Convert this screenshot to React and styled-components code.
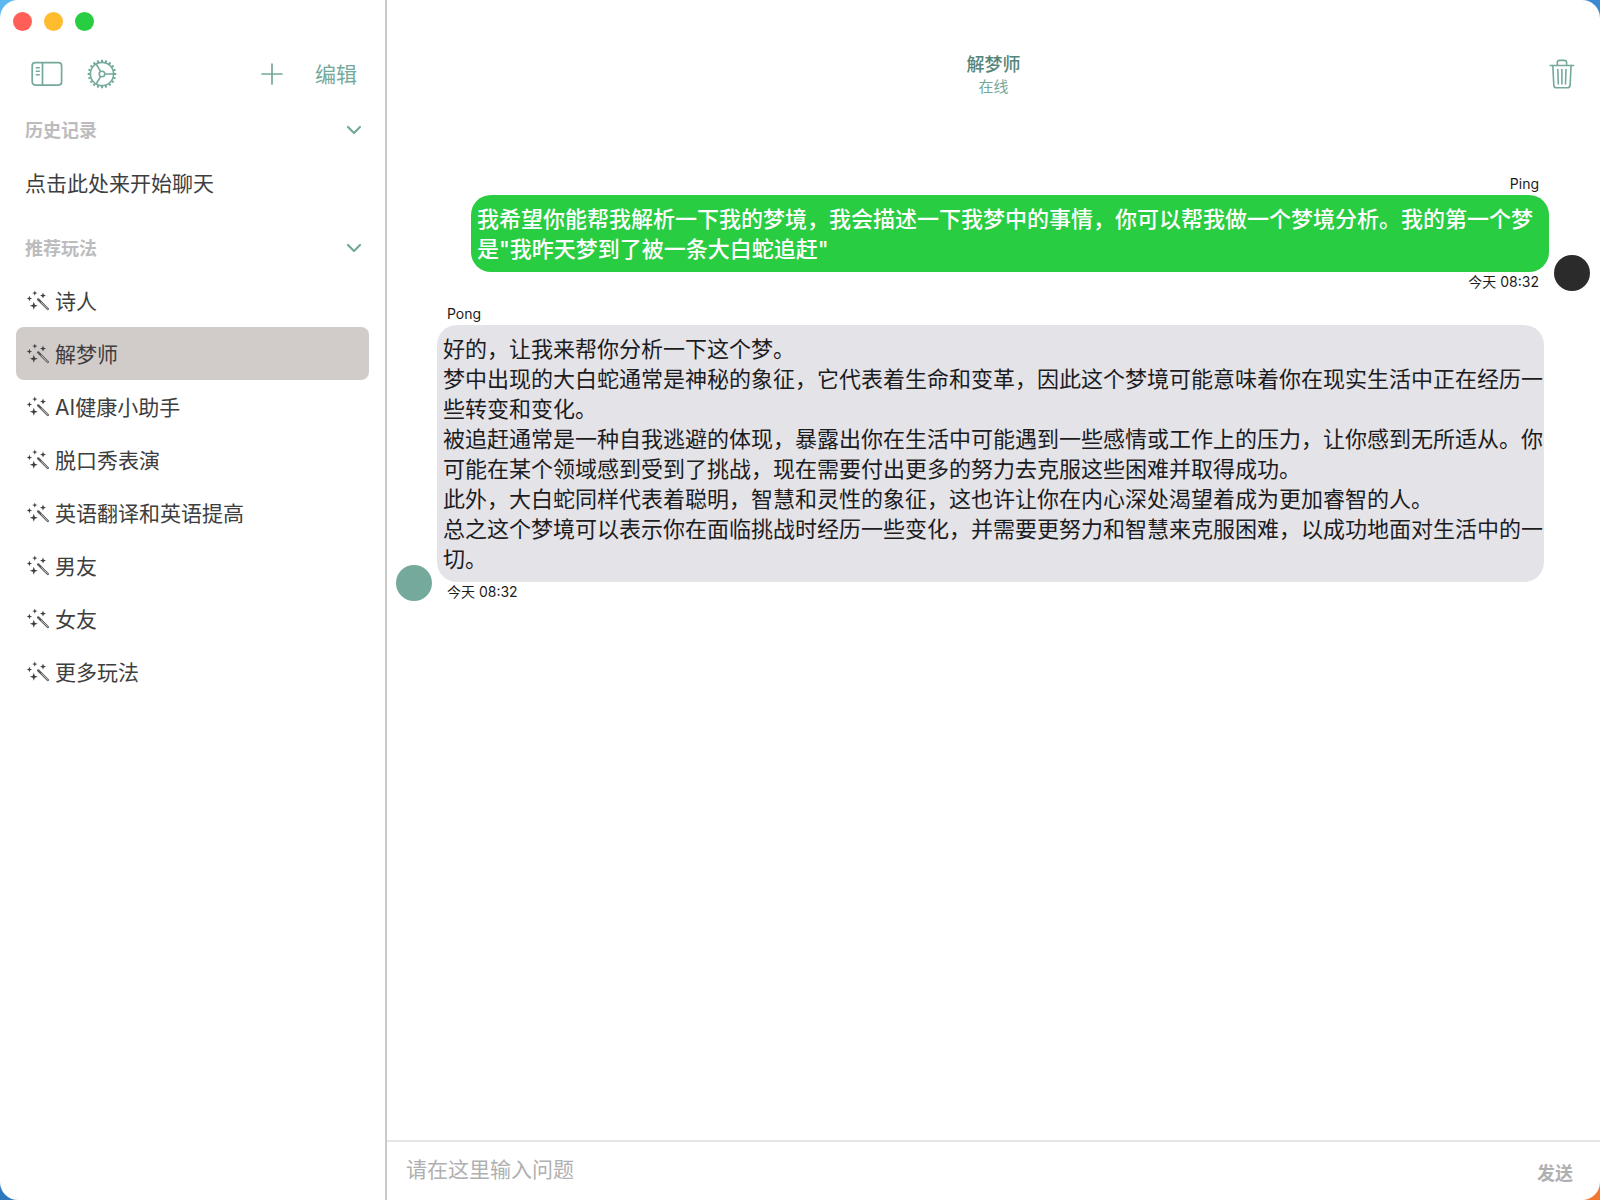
import React, { useState } from 'react'
import styled, { createGlobalStyle } from 'styled-components'

const GlobalStyle = createGlobalStyle`
  * {
    box-sizing: border-box;
  }

  body {
    margin: 0;
    background: linear-gradient(to right, transparent 50%, #f07830 50%) bottom / 100% 50% no-repeat,
      linear-gradient(to right, transparent 50%, #3b8acf 50%) top / 100% 50% no-repeat,
      linear-gradient(#5cb8ee, #2f78bd);
    background-attachment: fixed;
    font-family: Inter, "Noto Sans CJK SC", sans-serif;
    color: #1c1c1e;
  }

  button, input {
    font: inherit;
  }
`

const Window = styled.div`
  display: flex;
  height: 100vh;
  border-radius: 18px;
  overflow: hidden;
  background: #fff;
`

const Sidebar = styled.aside`
  flex: none;
  width: 387px;
  border-right: 2px solid #c9c9c9;
`

const TrafficLights = styled.div`
  display: flex;
  gap: 12px;
  padding: 12px 13px 0;
`

const Light = styled.span`
  width: 19px;
  height: 19px;
  border-radius: 50%;
  background: ${props => props.$color};
`

const Toolbar = styled.div`
  display: flex;
  align-items: center;
  height: 42px;
  margin: 22px 0 8px;
  padding: 0 28px 0 31px;
`

const ToolButton = styled.button`
  display: flex;
  align-items: center;
  padding: 0;
  border: 0;
  background: none;
  color: #74a99c;
  font-size: 21px;
  cursor: pointer;
`

const Label = styled.span`
  padding-bottom: 2px;
`

const LeftTools = styled.div`
  display: flex;
  gap: 24px;
  flex: 1;
`

const RightTools = styled.div`
  display: flex;
  align-items: center;
  gap: 32px;
`

const Section = styled.section`
  padding: 0 16px;
  margin-bottom: 12px;
`

const SectionHeader = styled.button`
  display: flex;
  align-items: center;
  justify-content: space-between;
  width: 100%;
  height: 53px;
  padding: 0 7px 0 9px;
  border: 0;
  background: none;
  color: #bcbcbe;
  font-size: 18px;
  font-weight: 700;
  cursor: pointer;
`

const Item = styled.button`
  display: flex;
  align-items: center;
  gap: 6px;
  width: 100%;
  height: 53px;
  padding: 0 9px;
  border: 0;
  border-radius: 8px;
  background: ${props => (props.$active ? '#d1cbc9' : 'none')};
  color: #3e3e40;
  font-size: 21px;
  text-align: left;
  cursor: pointer;
`

const Main = styled.main`
  display: flex;
  flex-direction: column;
  flex: 1;
  min-width: 0;
`

const Header = styled.header`
  display: grid;
  grid-template-columns: 1fr auto 1fr;
  align-items: center;
  height: 74px;
  margin-top: 37px;
  padding: 0 25px;
`

const Heading = styled.div`
  grid-column: 2;
  padding-top: 2px;
  text-align: center;
`

const Title = styled.h1`
  margin: 0;
  color: #56857a;
  font-size: 18px;
  font-weight: 500;
  line-height: 24px;
`

const Status = styled.div`
  color: #74a99c;
  font-size: 15px;
  line-height: 20px;
`

const DeleteButton = styled(ToolButton)`
  justify-self: end;
`

const Messages = styled.div`
  flex: 1;
  padding: 63px 10px 0 9px;
  overflow: auto;
`

const Message = styled.article`
  display: flex;
  flex-direction: ${props => (props.$mine ? 'row-reverse' : 'row')};
  align-items: flex-end;
  gap: 5px;
  margin-bottom: 13px;
  padding-left: ${props => (props.$mine ? '75px' : '0')};
  padding-right: ${props => (props.$mine ? '0' : '46px')};
`

const Avatar = styled.div`
  flex: none;
  width: 36px;
  height: 36px;
  border-radius: 50%;
  background: ${props => (props.$mine ? '#2b2b2b' : '#74a99c')};
`

const Content = styled.div`
  flex: 1;
  text-align: ${props => (props.$mine ? 'right' : 'left')};
`

const Caption = styled.div`
  padding: ${props => (props.$time ? '0 10px' : '0 10px 2px')};
  font-size: 14px;
  line-height: 19px;
`

const Bubble = styled.div`
  padding: 9px 0 8px 6px;
  border-radius: 20px;
  background: ${props => (props.$mine ? '#28cd41' : '#e4e3e8')};
  color: ${props => (props.$mine ? '#fff' : '#1c1c1e')};
  font-size: 22px;
  font-weight: ${props => (props.$mine ? 500 : 400)};
  line-height: 30px;
  text-align: left;
  white-space: pre-line;
`

const Composer = styled.form`
  display: flex;
  align-items: center;
  height: 60px;
  padding: 0 27px 4px 19px;
  border-top: 2px solid #e5e6e6;
`

const QuestionInput = styled.input`
  flex: 1;
  min-width: 0;
  padding: 0;
  border: 0;
  outline: none;
  background: none;
  font-size: 21px;

  &::placeholder {
    color: #b0b0b2;
    opacity: 1;
  }
`

const SendButton = styled.button`
  padding: 6px 0 0;
  border: 0;
  background: none;
  color: #b0b0b2;
  font-size: 18px;
  font-weight: 700;
`

const TEETH = Array.from({ length: 20 }, (_, i) => i * 18)

function SidebarIcon() {
  return (
    <svg width="32" height="26" viewBox="0 0 32 26" fill="none" stroke="currentColor" strokeWidth="1.7">
      <rect x="1.2" y="1.7" width="29.4" height="22.4" rx="3" />
      <path d="M11.5 2v22" />
      <path d="M4.8 6.8h4M4.8 10.3h4M4.8 13.8h4" strokeWidth="1.4" />
    </svg>
  )
}

function GearIcon() {
  return (
    <svg width="30" height="30" viewBox="-15 -15 30 30" fill="none" stroke="currentColor" strokeWidth="1.6">
      <circle r="11.6" />
      <circle r="2.8" />
      <path d="M2.8 0H11.6M-1.4 -2.4L-5.8 -10M-1.4 2.4L-5.8 10" />
      {TEETH.map(angle => (
        <path key={angle} d="M12 0H14.3" strokeWidth="2" transform={`rotate(${angle})`} />
      ))}
    </svg>
  )
}

function PlusIcon() {
  return (
    <svg width="22" height="22" viewBox="0 0 22 22" stroke="currentColor" strokeWidth="1.7" strokeLinecap="round">
      <path d="M11 1v20M1 11h20" />
    </svg>
  )
}

function ChevronIcon() {
  return (
    <svg width="16" height="10" viewBox="0 0 16 10" fill="none" stroke="#74a99c" strokeWidth="2.2" strokeLinecap="round" strokeLinejoin="round">
      <path d="M2 2l6 6 6-6" />
    </svg>
  )
}

function WandIcon() {
  return (
    <svg width="24" height="24" viewBox="0 0 24 24" fill="#3e3e40">
      <path d="M9.8 1.4l.7 2 2 .7-2 .7-.7 2-.7-2-2-.7 2-.7z" />
      <path d="M18 3.6l.8 2.2 2.2.8-2.2.8-.8 2.2-.8-2.2-2.2-.8 2.2-.8z" />
      <path d="M4.4 6.8l.7 2 2 .7-2 .7-.7 2-.7-2-2-.7 2-.7z" />
      <path d="M8.8 12.8l1 3 3 1-3 1-1 3-1-3-3-1 3-1z" />
      <path d="M13.2 10.4L22.8 20" stroke="#58585a" strokeWidth="2.4" strokeLinecap="round" />
      <path d="M16.4 13.6l6.2 6.2" stroke="#c8c8ca" strokeWidth="1" strokeLinecap="round" />
    </svg>
  )
}

function TrashIcon() {
  return (
    <svg width="26" height="30" viewBox="0 0 26 30" fill="none" stroke="currentColor" strokeWidth="1.6" strokeLinecap="round" strokeLinejoin="round">
      <path d="M1.2 6.5h23.4M8.3 6.5V3.6q0-2.2 2.2-2.2h4.9q2.2 0 2.2 2.2v2.9" />
      <path d="M3.8 6.5l1 19.6q.1 2.6 2.7 2.6h10.9q2.6 0 2.7-2.6l1-19.6M8.8 10.5l.5 14.4M12.9 10.5v14.4M17 10.5l-.5 14.4" />
    </svg>
  )
}

const PRESETS = [
  '诗人',
  '解梦师',
  'AI健康小助手',
  '脱口秀表演',
  '英语翻译和英语提高',
  '男友',
  '女友',
  '更多玩法',
]

const MESSAGES = [
  {
    name: 'Ping',
    mine: true,
    time: '今天 08:32',
    text: '我希望你能帮我解析一下我的梦境，我会描述一下我梦中的事情，你可以帮我做一个梦境分析。我的第一个梦是"我昨天梦到了被一条大白蛇追赶"',
  },
  {
    name: 'Pong',
    mine: false,
    time: '今天 08:32',
    text: `好的，让我来帮你分析一下这个梦。
梦中出现的大白蛇通常是神秘的象征，它代表着生命和变革，因此这个梦境可能意味着你在现实生活中正在经历一些转变和变化。
被追赶通常是一种自我逃避的体现，暴露出你在生活中可能遇到一些感情或工作上的压力，让你感到无所适从。你可能在某个领域感到受到了挑战，现在需要付出更多的努力去克服这些困难并取得成功。
此外，大白蛇同样代表着聪明，智慧和灵性的象征，这也许让你在内心深处渴望着成为更加睿智的人。
总之这个梦境可以表示你在面临挑战时经历一些变化，并需要更努力和智慧来克服困难，以成功地面对生活中的一切。`,
  },
]

export default function App() {
  const [ selected, setSelected ] = useState('解梦师')
  const [ question, setQuestion ] = useState('')

  return (
    <Window>
      <GlobalStyle />
      <Sidebar>
        <TrafficLights>
          <Light $color="#ff5f57" />
          <Light $color="#febc2e" />
          <Light $color="#28cd41" />
        </TrafficLights>
        <Toolbar>
          <LeftTools>
            <ToolButton aria-label="侧边栏"><SidebarIcon /></ToolButton>
            <ToolButton aria-label="设置"><GearIcon /></ToolButton>
          </LeftTools>
          <RightTools>
            <ToolButton aria-label="新建"><PlusIcon /></ToolButton>
            <ToolButton><Label>编辑</Label></ToolButton>
          </RightTools>
        </Toolbar>

        <Section>
          <SectionHeader><Label>历史记录</Label><ChevronIcon /></SectionHeader>
          <Item><Label>点击此处来开始聊天</Label></Item>
        </Section>

        <Section>
          <SectionHeader><Label>推荐玩法</Label><ChevronIcon /></SectionHeader>
          {PRESETS.map(name => (
            <Item key={name} $active={name === selected} onClick={() => setSelected(name)}>
              <WandIcon />
              <Label>{name}</Label>
            </Item>
          ))}
        </Section>
      </Sidebar>

      <Main>
        <Header>
          <Heading>
            <Title>{selected}</Title>
            <Status>在线</Status>
          </Heading>
          <DeleteButton aria-label="删除"><TrashIcon /></DeleteButton>
        </Header>

        <Messages>
          {MESSAGES.map(message => (
            <Message key={message.name} $mine={message.mine}>
              <Avatar $mine={message.mine} />
              <Content $mine={message.mine}>
                <Caption>{message.name}</Caption>
                <Bubble $mine={message.mine}>{message.text}</Bubble>
                <Caption $time>{message.time}</Caption>
              </Content>
            </Message>
          ))}
        </Messages>

        <Composer onSubmit={e => e.preventDefault()}>
          <QuestionInput
            type="text"
            aria-label="问题"
            placeholder="请在这里输入问题"
            value={question}
            onChange={e => setQuestion(e.target.value)}
          />
          <SendButton type="submit" disabled={!question}>发送</SendButton>
        </Composer>
      </Main>
    </Window>
  )
}
